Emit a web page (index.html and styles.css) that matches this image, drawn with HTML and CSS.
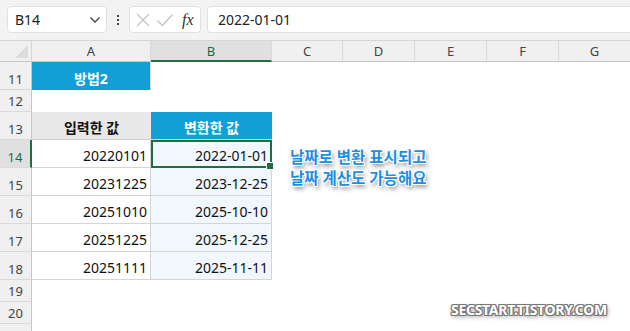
FILE: index.html
```html
<!DOCTYPE html>
<html lang="ko">
<head>
    <meta charset="UTF-8">
    <title>B14 - 날짜 변환</title>
    <link rel="stylesheet" href="styles.css">
</head>
<body>
    <div class="toolbar">
        <div class="namebox">
            <span>B14</span>
            <svg width="12" height="8" viewBox="0 0 12 8"><path d="M1.5 1.5 L6 6 L10.5 1.5" fill="none" stroke="#444" stroke-width="1.3"/></svg>
        </div>
        <div class="dots"><i></i><i></i><i></i></div>
        <div class="fxbox">
            <svg width="16" height="16" viewBox="0 0 16 16"><path d="M2 2 L14 14 M14 2 L2 14" stroke="#c4c4c4" stroke-width="1.3"/></svg>
            <svg width="18" height="16" viewBox="0 0 18 16"><path d="M1.5 8.5 L6.5 13.5 L16.5 2.5" fill="none" stroke="#c4c4c4" stroke-width="1.3"/></svg>
            <span class="fx">fx</span>
        </div>
        <div class="formula">2022-01-01</div>
    </div>

    <div class="sheet">
        <div class="corner"><span class="tri"></span></div>
        <div class="colhead">A</div>
        <div class="colhead active">B</div>
        <div class="colhead">C</div>
        <div class="colhead">D</div>
        <div class="colhead">E</div>
        <div class="colhead">F</div>
        <div class="colhead last">G</div>

        <div class="rowhead">11</div>
        <div class="cell title">방법2</div>
        <div class="cell"></div><div class="cell rest"></div>

        <div class="rowhead">12</div>
        <div class="cell"></div><div class="cell"></div><div class="cell rest"></div>

        <div class="rowhead">13</div>
        <div class="cell head gray">입력한 값</div>
        <div class="cell head blue">변환한 값</div>
        <div class="cell rest"></div>

        <div class="rowhead active">14</div>
        <div class="cell num">20220101</div>
        <div class="cell num date selected">2022-01-01<span class="handle"></span></div>
        <div class="cell rest"></div>

        <div class="rowhead">15</div>
        <div class="cell num">20231225</div>
        <div class="cell num date">2023-12-25</div>
        <div class="cell rest"></div>

        <div class="rowhead">16</div>
        <div class="cell num">20251010</div>
        <div class="cell num date">2025-10-10</div>
        <div class="cell rest"></div>

        <div class="rowhead">17</div>
        <div class="cell num">20251225</div>
        <div class="cell num date">2025-12-25</div>
        <div class="cell rest"></div>

        <div class="rowhead">18</div>
        <div class="cell num">20251111</div>
        <div class="cell num date">2025-11-11</div>
        <div class="cell rest"></div>

        <div class="rowhead">19</div>
        <div class="cell"></div><div class="cell"></div><div class="cell rest"></div>

        <div class="rowhead">20</div>
        <div class="cell"></div><div class="cell"></div><div class="cell rest"></div>

        <div class="rowhead"></div>
        <div class="cell"></div><div class="cell"></div><div class="cell rest"></div>

        <div class="note">날짜로 변환 표시되고<br>날짜 계산도 가능해요</div>
        <div class="mark">SECSTART.TISTORY.COM</div>
    </div>
</body>
</html>
```

FILE: styles.css
```css
body {
    margin: 0;
    font-family: "Noto Sans", "Noto Sans CJK KR", sans-serif;
    color: #222;
    background: #fff;
    width: 630px;
    height: 331px;
    overflow: hidden;
}

.toolbar {
    height: 41px;
    box-sizing: border-box;
    background: #f3f3f3;
    border-bottom: 1px solid #d6d6d6;
    display: flex;
    align-items: flex-start;
    padding: 6px 0 0 7px;
}
.namebox {
    width: 100px;
    height: 27px;
    box-sizing: border-box;
    background: #fff;
    border: 1px solid #e2e2e2;
    border-radius: 4px;
    display: flex;
    align-items: center;
    justify-content: space-between;
    padding: 0 5px 0 7px;
    font-size: 14px;
    color: #222;
}
.dots {
    width: 22px;
    height: 27px;
    display: flex;
    flex-direction: column;
    align-items: center;
    justify-content: center;
    gap: 2px;
}
.dots i {
    width: 2px;
    height: 2px;
    background: #444;
}
.fxbox {
    width: 72px;
    height: 27px;
    box-sizing: border-box;
    background: #fff;
    border: 1px solid #e2e2e2;
    border-radius: 4px;
    display: flex;
    align-items: center;
    gap: 5px;
    padding-left: 5px;
}
.fx {
    font-family: "Liberation Serif", serif;
    font-style: italic;
    font-size: 16px;
    color: #333;
    margin-left: 3px;
}
.formula {
    flex: 1;
    height: 27px;
    box-sizing: border-box;
    margin-left: 6px;
    background: #fff;
    border: 1px solid #e2e2e2;
    border-right: none;
    border-radius: 4px 0 0 4px;
    font-size: 14px;
    line-height: 25px;
    padding-left: 10px;
    color: #222;
}

.sheet {
    position: relative;
    display: grid;
    grid-template-columns: 32px 119px 121px 71px 72px 72px 72px 71px;
    grid-template-rows: 21px 28px 22px 28px 28px 28px 28px 28px 28px 22px 22px 20px;
}
.corner {
    background: #f0f0f0;
    border-right: 1px solid #d4d4d4;
    border-bottom: 1px solid #c6c6c6;
    position: relative;
}
.tri {
    position: absolute;
    right: 3px;
    bottom: 3px;
    width: 0;
    height: 0;
    border-left: 13px solid transparent;
    border-bottom: 13px solid #dcdcdc;
}
.colhead {
    background: #f0f0f0;
    border-right: 1px solid #dadada;
    border-bottom: 1px solid #c6c6c6;
    font-size: 13px;
    color: #444;
    text-align: center;
    line-height: 21px;
}
.colhead.active {
    background: #e0e0e0;
    color: #1e6b3f;
    border-bottom: 2px solid #1e6e40;
}
.colhead.last {
    border-right: none;
}
.rowhead {
    background: #f0f0f0;
    border-right: 1px solid #c6c6c6;
    border-bottom: 1px solid #dadada;
    font-size: 13px;
    color: #444;
    display: flex;
    align-items: flex-end;
    justify-content: center;
    padding-bottom: 1px;
    box-sizing: border-box;
}
.rowhead.active {
    background: #e0e0e0;
    color: #1e6b3f;
    border-right: 2px solid #1e6e40;
}

.cell {
    font-size: 14px;
    box-sizing: border-box;
    display: flex;
    align-items: flex-end;
    padding: 0 3px 2px;
    white-space: nowrap;
}
.rest {
    grid-column: span 5;
}
.title {
    background: #129fd6;
    color: #fff;
    font-weight: bold;
    justify-content: center;
    border-right: 1px solid #d4d4d4;
}
.head {
    font-weight: bold;
    justify-content: center;
    border-bottom: 1px solid #d0d0d0;
}
.head.gray {
    background: #e8e8e8;
    color: #111;
}
.head.blue {
    background: #129fd6;
    color: #fff;
}
.num {
    justify-content: flex-end;
    border-right: 1px solid #d4d4d4;
    border-bottom: 1px solid #d4d4d4;
    color: #111;
}
.date {
    background: #f0f7fd;
}
.selected {
    position: relative;
    border: 2px solid #1e6e40;
    padding-right: 2px;
    padding-bottom: 1px;
}
.handle {
    position: absolute;
    right: -4px;
    bottom: -4px;
    width: 6px;
    height: 6px;
    background: #1e6e40;
    border: 1px solid #fff;
}

.note {
    position: absolute;
    left: 290px;
    top: 106px;
    font-size: 15.5px;
    font-weight: bold;
    line-height: 21px;
    color: #1d8fe0;
    text-shadow:
        -1px -1px 0 #fff, 1px -1px 0 #fff, -1px 1px 0 #fff, 1px 1px 0 #fff,
        0 -1px 0 #fff, 0 1px 0 #fff, -1px 0 0 #fff, 1px 0 0 #fff,
        2px 3px 4px rgba(0, 0, 0, 0.55);
}
.mark {
    position: absolute;
    left: 451px;
    top: 259px;
    font-size: 14px;
    font-weight: bold;
    letter-spacing: -0.3px;
    color: #fff;
    text-shadow:
        -1px -1px 0 #777, 1px -1px 0 #777, -1px 1px 0 #777, 1px 1px 0 #777,
        0 -1px 0 #777, 0 1px 0 #777, -1px 0 0 #777, 1px 0 0 #777,
        1px 2px 4px rgba(0, 0, 0, 0.5);
}
```
